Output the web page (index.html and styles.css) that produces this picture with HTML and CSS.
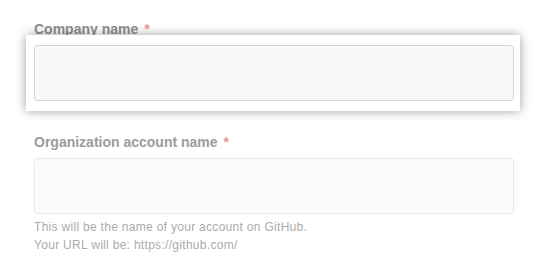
FILE: index.html
```html
<!DOCTYPE html>
<html>
<head>
<meta charset="utf-8">
<link rel="stylesheet" href="styles.css">
</head>
<body>
<form class="form">
  <div class="group">
    <label class="label label-dim">Company name <span class="req">*</span></label>
    <div class="spotlight">
      <input class="input input-active" type="text">
    </div>
  </div>
  <div class="group group-second">
    <label class="label label-faded">Organization account name <span class="req">*</span></label>
    <input class="input input-faded" type="text">
    <p class="note">This will be the name of your account on GitHub.<br>Your URL will be: https://github.com/</p>
  </div>
</form>
</body>
</html>
```
FILE: styles.css
```css
html, body {
  margin: 0;
  padding: 0;
  background: #ffffff;
}
body {
  font-family: "Liberation Sans", Arial, sans-serif;
  width: 537px;
  height: 267px;
  overflow: hidden;
}
.form {
  padding: 21px 23px 0 34px;
}
.group {
  display: flex;
  flex-direction: column;
}
.label {
  display: block;
  font-size: 14px;
  font-weight: 700;
  line-height: 16px;
}
.label-dim {
  color: #8d8d8d;
}
.label-faded {
  color: #9c9c9c;
  line-height: 20px;
  margin-bottom: 6px;
}
.req {
  color: #e89a9a;
  margin-left: 2px;
}
.spotlight {
  margin: -2px -6px 0 -8px;
  padding: 10px 6px 10px 8px;
  background: #ffffff;
  box-shadow: 0 0 10px rgba(0, 0, 0, 0.38);
  position: relative;
}
.input {
  display: block;
  box-sizing: border-box;
  width: 480px;
  height: 56px;
  border-radius: 3px;
  margin: 0;
  padding: 0 8px;
  font: inherit;
}
.input-active {
  background: #f7f8fa;
  border: 1px solid #d3d6da;
}
.input-faded {
  background: #fafbfb;
  border: 1px solid #e6e8ea;
}
.group-second {
  margin-top: 21px;
}
.note {
  margin: 4px 0 0;
  font-size: 12px;
  line-height: 18px;
  letter-spacing: 0.3px;
  color: #ababab;
}
```
